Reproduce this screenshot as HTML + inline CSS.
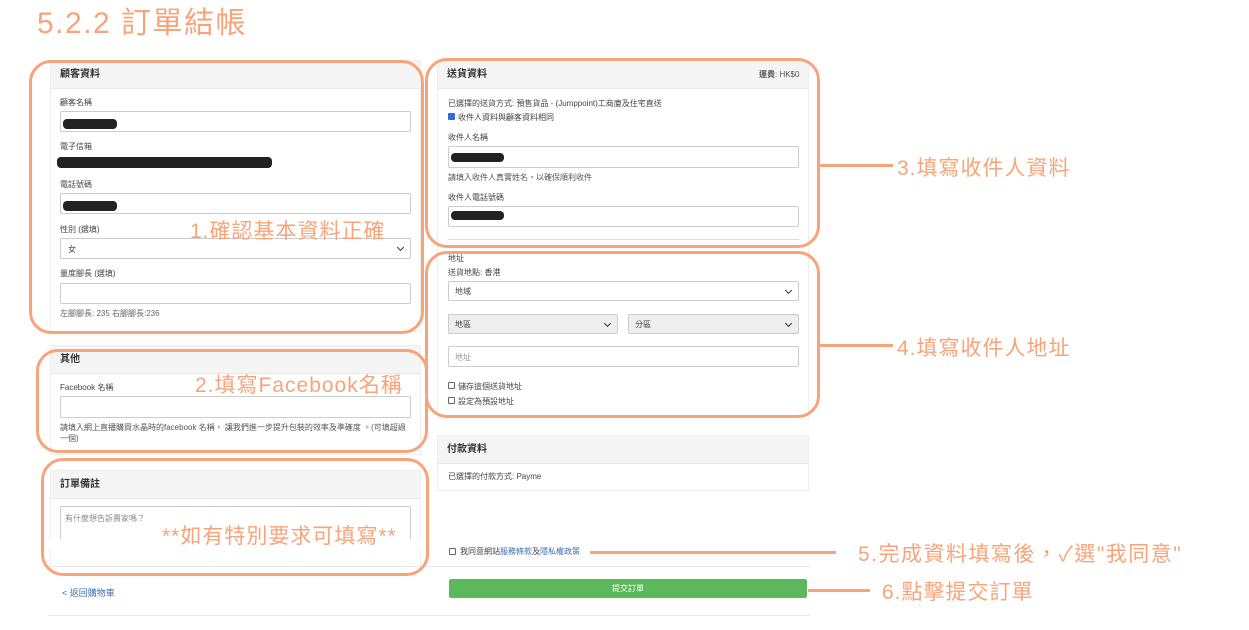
<!DOCTYPE html>
<html><head><meta charset="utf-8"><style>
*{margin:0;padding:0;box-sizing:border-box}
body{width:1249px;height:630px;background:#fff;position:relative;overflow:hidden;font-family:"Liberation Sans","Noto Sans CJK TC",sans-serif;color:#444}
.a{position:absolute}
.t{font-size:8px;color:#444;white-space:nowrap}
.card{position:absolute;background:#fff;border:1px solid #eee}
.hd{position:absolute;left:0;right:0;top:0;background:#f5f5f5;border-bottom:1px solid #e8e8e8;font-size:10px;font-weight:bold;color:#333;padding-left:9px}
.in{position:absolute;border:1px solid #ccc;border-radius:2px;background:#fff}
.bar{position:absolute;background:#222;border-radius:4px}
.ob{position:absolute;border:3px solid #f7a47a;border-radius:22px}
.lbl{position:absolute;color:#f7a47a;font-size:21px;letter-spacing:1px;white-space:nowrap;font-family:"Liberation Sans","Noto Sans CJK TC",sans-serif}
.ln{position:absolute;height:3px;background:#f7a47a}
.chev{position:absolute;width:5px;height:5px;border-right:1.5px solid #333;border-bottom:1.5px solid #333;transform:rotate(45deg)}
.cb{position:absolute;width:7px;height:7px;border:1px solid #666;border-radius:1px;background:#fff}
</style></head><body>
<div class="a" style="left:37px;top:-2px;font-size:30px;letter-spacing:1.5px;color:#f7a47a;white-space:nowrap">5.2.2 訂單結帳</div>

<div class="card" style="left:50px;top:60px;width:371px;height:272px">
  <div class="hd" style="height:28px;line-height:28px">顧客資料</div>
</div>
<div class="a t" style="left:60px;top:97px">顧客名稱</div>
<div class="in" style="left:60px;top:111px;width:351px;height:21px"></div>
<div class="bar" style="left:63px;top:119px;width:54px;height:10px"></div>
<div class="a t" style="left:60px;top:141px">電子信箱</div>
<div class="bar" style="left:57px;top:157px;width:215px;height:11px"></div>
<div class="a t" style="left:60px;top:179px">電話號碼</div>
<div class="in" style="left:60px;top:193px;width:351px;height:21px"></div>
<div class="bar" style="left:63px;top:201px;width:54px;height:10px"></div>
<div class="a t" style="left:60px;top:224px">性別 (選填)</div>
<div class="in" style="left:60px;top:238px;width:351px;height:21px"></div>
<div class="a t" style="left:68px;top:244px">女</div>
<div class="chev" style="left:398px;top:245px"></div>
<div class="a t" style="left:60px;top:268px">量度腳長 (選填)</div>
<div class="in" style="left:60px;top:283px;width:351px;height:21px"></div>
<div class="a t" style="left:60px;top:308px;color:#666">左腳腳長: 235 右腳腳長:236</div>
<div class="ob" style="left:29px;top:60px;width:395px;height:274px"></div>
<div class="lbl" style="left:190px;top:215px">1.確認基本資料正確</div>

<div class="card" style="left:50px;top:345px;width:371px;height:110px">
  <div class="hd" style="height:28px;line-height:28px">其他</div>
</div>
<div class="a t" style="left:60px;top:382px">Facebook 名稱</div>
<div class="in" style="left:60px;top:396px;width:351px;height:22px"></div>
<div class="a t" style="left:60px;top:422px;color:#555">請填入網上直播購買水晶時的facebook 名稱， 讓我們進一步提升包裝的效率及準確度 。(可填超過</div>
<div class="a t" style="left:60px;top:433px;color:#555">一個)</div>
<div class="ob" style="left:36px;top:349px;width:392px;height:104px"></div>
<div class="lbl" style="left:195px;top:369px">2.填寫Facebook名稱</div>

<div class="card" style="left:50px;top:470px;width:371px;height:96px;border-bottom:none">
  <div class="hd" style="height:28px;line-height:28px">訂單備註</div>
</div>
<div class="in" style="left:60px;top:506px;width:351px;height:40px;border-bottom:none"></div>
<div class="a t" style="left:65px;top:513px;color:#888">有什麼想告訴賣家嗎？</div>
<div class="a" style="left:42px;top:539px;width:385px;height:10px;background:#fff"></div>
<div class="a" style="left:42px;top:566px;width:768px;height:1px;background:#e8e8e8"></div>
<div class="ob" style="left:41px;top:458px;width:388px;height:118px"></div>
<div class="lbl" style="left:162px;top:520px">**如有特別要求可填寫**</div>

<div class="a t" style="left:62px;top:586px;color:#3a6ea8;font-size:9px">&lt; 返回購物車</div>
<div class="a" style="left:48px;top:615px;width:762px;height:1px;background:#e8e8e8"></div>

<div class="card" style="left:437px;top:60px;width:372px;height:360px;border-bottom:none">
  <div class="hd" style="height:28px;line-height:28px">送貨資料</div>
</div>
<div class="a t" style="left:759px;top:69px;color:#555"><b>運費</b>: HK$0</div>
<div class="a t" style="left:448px;top:98px">已選擇的送貨方式: 預售貨品 - (Jumppoint)工商廈及住宅直送</div>
<div class="a" style="left:448px;top:113px;width:7px;height:7px;background:#2a6fd6;border-radius:1px"></div>
<div class="a t" style="left:458px;top:112px">收件人資料與顧客資料相同</div>
<div class="a t" style="left:448px;top:132px">收件人名稱</div>
<div class="in" style="left:448px;top:146px;width:351px;height:22px"></div>
<div class="bar" style="left:451px;top:153px;width:53px;height:9px"></div>
<div class="a t" style="left:448px;top:172px;color:#555">請填入收件人真實姓名，以確保順利收件</div>
<div class="a t" style="left:448px;top:192px">收件人電話號碼</div>
<div class="in" style="left:448px;top:206px;width:351px;height:21px"></div>
<div class="bar" style="left:451px;top:211px;width:53px;height:9px"></div>
<div class="a" style="left:448px;top:239px;width:351px;height:1px;background:#ddd"></div>
<div class="ob" style="left:425px;top:58px;width:395px;height:190px"></div>
<div class="ln" style="left:820px;top:164px;width:73px"></div>
<div class="lbl" style="left:897px;top:152px">3.填寫收件人資料</div>

<div class="a t" style="left:448px;top:253px">地址</div>
<div class="a t" style="left:448px;top:267px">送貨地點: 香港</div>
<div class="in" style="left:448px;top:281px;width:351px;height:20px"></div>
<div class="a t" style="left:455px;top:286px">地域</div>
<div class="chev" style="left:786px;top:288px"></div>
<div class="in" style="left:448px;top:314px;width:170px;height:20px;background:#eee"></div>
<div class="a t" style="left:455px;top:319px">地區</div>
<div class="chev" style="left:605px;top:321px"></div>
<div class="in" style="left:628px;top:314px;width:171px;height:20px;background:#eee"></div>
<div class="a t" style="left:635px;top:319px">分區</div>
<div class="chev" style="left:786px;top:321px"></div>
<div class="in" style="left:448px;top:346px;width:351px;height:21px"></div>
<div class="a t" style="left:455px;top:352px;color:#999">地址</div>
<div class="cb" style="left:448px;top:382px"></div>
<div class="a t" style="left:458px;top:381px">儲存這個送貨地址</div>
<div class="cb" style="left:448px;top:397px"></div>
<div class="a t" style="left:458px;top:396px">設定為預設地址</div>
<div class="ob" style="left:425px;top:251px;width:395px;height:167px"></div>
<div class="ln" style="left:820px;top:344px;width:73px"></div>
<div class="lbl" style="left:897px;top:332px">4.填寫收件人地址</div>

<div class="card" style="left:437px;top:435px;width:372px;height:56px">
  <div class="hd" style="height:28px;line-height:28px">付款資料</div>
</div>
<div class="a t" style="left:448px;top:471px">已選擇的付款方式: Payme</div>

<div class="cb" style="left:449px;top:548px"></div>
<div class="a t" style="left:460px;top:546px">我同意網站<span style="color:#3a6ea8">服務條款</span>及<span style="color:#3a6ea8">隱私權政策</span></div>
<div class="ln" style="left:590px;top:551px;width:246px"></div>
<div class="lbl" style="left:858px;top:538px;letter-spacing:1.5px">5.完成資料填寫後，✓選"我同意"</div>

<div class="a" style="left:449px;top:579px;width:358px;height:19px;background:#5cb85c;border-radius:2px;color:#fff;font-size:8px;text-align:center;line-height:19px">提交訂單</div>
<div class="ln" style="left:808px;top:589px;width:62px"></div>
<div class="lbl" style="left:882px;top:576px">6.點擊提交訂單</div>
</body></html>
